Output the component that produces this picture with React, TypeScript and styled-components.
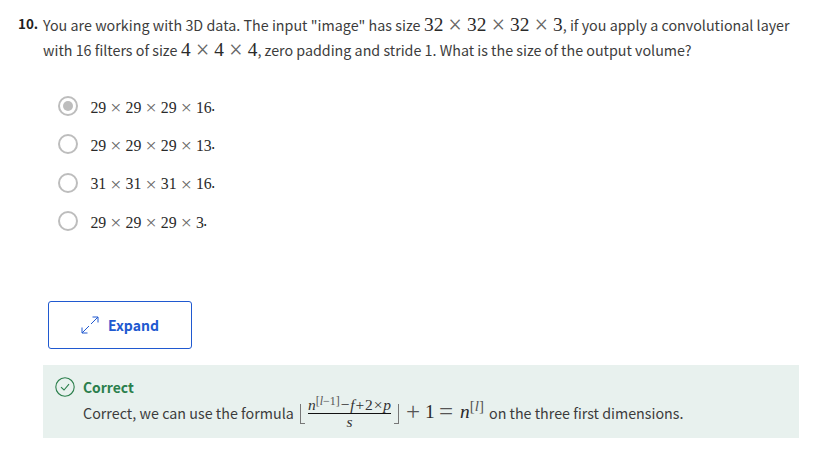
import React from 'react';
import styled, { createGlobalStyle } from 'styled-components';

const GlobalStyle = createGlobalStyle`
  * { box-sizing: border-box; }
  body { margin: 0; background: #fff; color: #1f1f1f; }
`;

const sans = `"Noto Sans CJK SC", "Noto Sans", sans-serif`;
const serif = `"Liberation Serif", serif`;

const Page = styled.main`
  width: 827px;
  height: 458px;
  padding: 13px 28px 0 18px;
  overflow: hidden;
  font-family: ${sans};
  font-size: 14.29px;
`;

const Question = styled.section`
  display: flex;
  height: 83px;
`;

const QuestionNumber = styled.div`
  width: 25px;
  flex: none;
  font-weight: 700;
  font-size: 13.4px;
  line-height: 21px;
`;

const Prompt = styled.div`
  display: flex;
  flex-direction: column;
  margin-top: -1px;
  color: #3c3c3c;
`;

const PromptLine = styled.div`
  display: flex;
  align-items: baseline;
  height: 25px;
  line-height: 25px;
  white-space: pre;
`;

const Run = styled.span<{ $width?: number; $spacing?: number }>`
  flex: none;
  width: ${p => (p.$width ? `${p.$width}px` : 'auto')};
  letter-spacing: ${p => p.$spacing ?? 0}px;
  white-space: pre;
`;

const MathRow = styled.span<{ $size: number }>`
  display: inline-flex;
  align-items: baseline;
  flex: none;
  font-family: ${serif};
  font-size: ${p => p.$size}px;
  line-height: 20px;
  color: #2a2a2a;
`;

const Times = styled.span`
  width: 0.9776em;
  text-align: center;
  font-size: 1.25em;
  line-height: 0;
  color: #666;
  position: relative;
  top: 0.08em;
`;

const Options = styled.div`
  display: flex;
  flex-direction: column;
  gap: 18.4px;
  height: 205px;
  padding-left: 40px;
`;

const Option = styled.label`
  display: flex;
  align-items: center;
  height: 20px;
  flex: none;
`;

const Radio = styled.span<{ $checked?: boolean }>`
  display: grid;
  place-items: center;
  width: 20px;
  height: 20px;
  margin-right: 12.4px;
  border: 2px solid #bdbdbd;
  border-radius: 50%;
  &::after {
    content: '';
    width: 10px;
    height: 10px;
    border-radius: 50%;
    background: ${p => (p.$checked ? '#bdbdbd' : 'transparent')};
  }
`;

const OptionText = styled.span`
  display: flex;
  align-items: center;
  padding-top: 3px;
`;

const Period = styled.span`
  margin-left: -0.6px;
  font-size: 14px;
  line-height: 12px;
  padding-bottom: 5px;
`;

const ExpandButton = styled.button`
  display: flex;
  align-items: center;
  width: 144px;
  height: 48px;
  margin-left: 30px;
  padding: 0 0 0 32px;
  border: 1px solid #2059d0;
  border-radius: 3px;
  background: #fff;
  color: #2059d0;
  font-family: ${sans};
  font-size: 14px;
  font-weight: 700;
  line-height: 20px;
  svg { margin-right: 9px; flex: none; }
`;

const Feedback = styled.section`
  display: flex;
  width: 756px;
  height: 73px;
  margin: 16px 0 0 25px;
  padding: 12px 0 0 12px;
  background: #e8f1ee;
`;

const FeedbackBody = styled.div`
  margin-left: 8px;
`;

const FeedbackTitle = styled.div`
  height: 20px;
  line-height: 21px;
  font-size: 13.9px;
  font-weight: 700;
  color: #2b7f4c;
`;

const FeedbackLine = styled.div`
  display: flex;
  align-items: flex-start;
  height: 32px;
  line-height: 32px;
  color: #3c3c3c;
`;

const Floor = styled.span<{ $side: 'left' | 'right' }>`
  width: 5px;
  height: 20px;
  margin: 7px ${p => (p.$side === 'left' ? '3px 0 1px' : '0 0 3px')};
  border-bottom: 1px solid #777;
  border-${p => p.$side}: 1px solid #777;
`;

const Fraction = styled.span`
  display: flex;
  flex-direction: column;
  width: 83px;
  font-family: ${serif};
  font-size: 15.5px;
  color: #333;
`;

const Numerator = styled.span`
  display: flex;
  justify-content: space-between;
  align-items: baseline;
  height: 17px;
  line-height: 16px;
  border-bottom: 1px solid #111;
`;

const Denominator = styled.span`
  height: 14px;
  line-height: 15px;
  text-align: center;
  font-style: italic;
`;

const Italic = styled.i``;

const Super = styled.sup<{ $size: number; $rise: number }>`
  position: relative;
  top: -${p => p.$rise}px;
  font-size: ${p => p.$size}px;
  line-height: 0;
  vertical-align: baseline;
  color: #555;
`;

const Tail = styled.span`
  display: flex;
  align-items: baseline;
  width: 90px;
  padding-left: 7px;
  font-family: ${serif};
  font-size: 19.4px;
  line-height: 30px;
  color: #2a2a2a;
`;

const Symbol = styled.span<{ $width: number }>`
  flex: none;
  width: ${p => p.$width}px;
  white-space: nowrap;
`;

const Operator = styled(Symbol)`
  font-size: 25px;
  line-height: 0;
  color: #555;
  position: relative;
  top: 2px;
`;

const Product = ({ terms, size }: { terms: string[]; size: number }) => (
  <MathRow $size={size}>
    {terms.map((term, i) => (
      <React.Fragment key={i}>
        {i > 0 && <Times>×</Times>}
        <span>{term}</span>
      </React.Fragment>
    ))}
  </MathRow>
);

const options = [
  ['29', '29', '29', '16'],
  ['29', '29', '29', '13'],
  ['31', '31', '31', '16'],
  ['29', '29', '29', '3'],
];

const ExpandIcon = () => (
  <svg width="18" height="18" viewBox="0 0 18 18" fill="none" stroke="#2059d0" strokeWidth="1">
    <path d="M10 8 17 1M11.5 1H17V6.5M8 10 1 17M1 11.5V17H6.5" />
  </svg>
);

const CheckIcon = () => (
  <svg width="20" height="20" viewBox="0 0 20 20" fill="none" stroke="#2b7f4c" strokeWidth="1.1">
    <circle cx="10" cy="10" r="9.2" />
    <path d="M6 10.2 9 13 14 7.2" />
  </svg>
);

export default function App() {
  return (
    <Page>
      <GlobalStyle />
      <Question>
        <QuestionNumber>10.</QuestionNumber>
        <Prompt>
          <PromptLine>
            <Run $width={381} $spacing={0.02}>You are working with 3D data. The input "image" has size </Run>
            <Product terms={['32', '32', '32', '3']} size={19.36} />
            <Run $spacing={0.01}>, if you apply a convolutional layer</Run>
          </PromptLine>
          <PromptLine>
            <Run $width={138}>with 16 filters of size </Run>
            <Product terms={['4', '4', '4']} size={19.36} />
            <Run>, zero padding and stride 1. What is the size of the output volume?</Run>
          </PromptLine>
        </Prompt>
      </Question>
      <Options>
        {options.map((terms, i) => (
          <Option key={i}>
            <Radio $checked={i === 0} />
            <OptionText>
              <Product terms={terms} size={15.84} />
              <Period>.</Period>
            </OptionText>
          </Option>
        ))}
      </Options>
      <ExpandButton>
        <ExpandIcon />
        Expand
      </ExpandButton>
      <Feedback>
        <CheckIcon />
        <FeedbackBody>
          <FeedbackTitle>Correct</FeedbackTitle>
          <FeedbackLine>
            <Run $width={216} $spacing={0.02}>Correct, we can use the formula</Run>
            <Floor $side="left" />
            <Fraction>
              <Numerator>
                <span><Italic>n</Italic><Super $size={12} $rise={5}>[<Italic>l</Italic>−1]</Super></span>
                <span>−</span>
                <Italic>f</Italic>
                <span>+</span>
                <span>2</span>
                <span>×</span>
                <Italic>p</Italic>
              </Numerator>
              <Denominator>s</Denominator>
            </Fraction>
            <Floor $side="right" />
            <Tail>
              <Operator $width={19}>+</Operator>
              <Symbol $width={14}>1</Symbol>
              <Operator $width={21}>=</Operator>
              <Symbol $width={29}><Italic>n</Italic><Super $size={15} $rise={7}>[<Italic>l</Italic>]</Super></Symbol>
            </Tail>
            <Run>on the three first dimensions.</Run>
          </FeedbackLine>
        </FeedbackBody>
      </Feedback>
    </Page>
  );
}
